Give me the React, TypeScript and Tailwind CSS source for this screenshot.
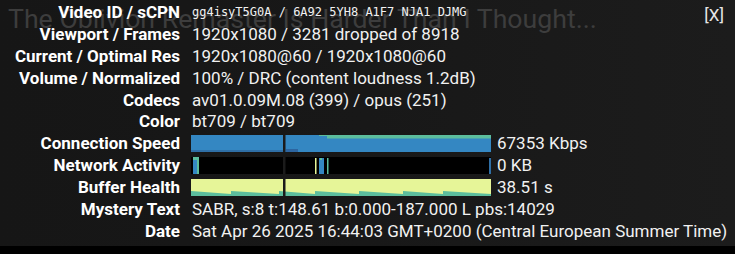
const rows: { label: string; value?: string; mono?: boolean; chart?: "speed" | "net" | "buffer" }[] = [
  { label: "Video ID / sCPN", value: "gg4isyT5G0A / 6A92 5YH8 A1F7 NJA1 DJMG", mono: true },
  { label: "Viewport / Frames", value: "1920x1080 / 3281 dropped of 8918" },
  { label: "Current / Optimal Res", value: "1920x1080@60 / 1920x1080@60" },
  { label: "Volume / Normalized", value: "100% / DRC (content loudness 1.2dB)" },
  { label: "Codecs", value: "av01.0.09M.08 (399) / opus (251)" },
  { label: "Color", value: "bt709 / bt709" },
  { label: "Connection Speed", value: "67353 Kbps", chart: "speed" },
  { label: "Network Activity", value: "0 KB", chart: "net" },
  { label: "Buffer Health", value: "38.51 s", chart: "buffer" },
  { label: "Mystery Text", value: "SABR, s:8 t:148.61 b:0.000-187.000 L pbs:14029" },
  { label: "Date", value: "Sat Apr 26 2025 16:44:03 GMT+0200 (Central European Summer Time)" },
];

const Chart = ({ kind }: { kind: "speed" | "net" | "buffer" }) => {
  if (kind === "speed") {
    return (
      <svg width="300" height="17" className="block">
        <rect x="0" y="0" width="300" height="17" fill="#3487c2" />
        <rect x="0" y="15" width="92" height="2" fill="#2f6fa6" />
        <rect x="95" y="14" width="12" height="3" fill="#2d65a0" />
        <rect x="128" y="0" width="172" height="1" fill="#5cbd9d" />
        <rect x="136" y="0" width="164" height="3.5" fill="#5cbd9d" />
        <rect x="92" y="0" width="2.5" height="17" fill="#1b1b1b" />
      </svg>
    );
  }
  if (kind === "net") {
    return (
      <svg width="300" height="17" className="block">
        <rect x="0" y="0" width="300" height="17" fill="#000" />
        <rect x="2" y="1" width="5" height="16" fill="#3487c2" />
        <rect x="6" y="0" width="2" height="17" fill="#5cbd9d" />
        <rect x="2" y="0" width="4" height="3" fill="#5cbd9d" />
        <rect x="124" y="1" width="1.5" height="16" fill="#e6f598" />
        <rect x="128" y="1" width="5" height="16" fill="#3487c2" />
        <rect x="129" y="1" width="2" height="2" fill="#5cbd9d" />
        <rect x="136" y="1" width="1.5" height="16" fill="#5cbd9d" />
        <rect x="298" y="1" width="2" height="16" fill="#2f6fa6" />
        <rect x="92" y="0" width="2.5" height="17" fill="#1b1b1b" />
      </svg>
    );
  }
  const steps = [0, 40, 88, 124, 168, 212, 252, 300];
  return (
    <svg width="300" height="17" className="block">
      <rect x="0" y="0" width="300" height="17" fill="#e6f598" />
      {steps.slice(0, -1).map((s, i) => (
        <polygon
          key={s}
          points={`${s},${17} ${s},${12} ${steps[i + 1]},${15} ${steps[i + 1]},${17}`}
          fill="#5cbd9d"
        />
      ))}
      <rect x="92" y="0" width="2.5" height="17" fill="#1b1b1b" />
    </svg>
  );
};

export default function App() {
  return (
    <div className="w-[735px] h-[254px] bg-black overflow-hidden">
      <div
        className="relative h-[246px] bg-gradient-to-r from-[#161616] via-[#181818] to-[#1c1c1c]"
        style={{ fontFamily: "Roboto, 'Noto Sans', Arial, sans-serif" }}
      >
        <div className="absolute left-[8px] top-[4px] text-[26.7px] leading-[30px] text-[#3d3d3d] whitespace-nowrap">
          The Oblivion Remaster Is Harder Than I Thought...
        </div>
        <div className="absolute right-[11px] top-[4px] text-[17px] leading-[22px] text-[#e6e6e6]">[X]</div>
        <div className="relative pt-[1px]">
          {rows.map((r) => (
            <div key={r.label} className="flex h-[21.9px] items-center">
              <div className="w-[180px] shrink-0 text-right text-[17px] font-bold text-white leading-[22px] whitespace-nowrap">
                {r.label}
              </div>
              <div className="pl-[12px] flex items-center whitespace-nowrap text-[#f1f1f1]">
                {r.chart && (
                  <div className="ml-[-1px] mr-[6px]">
                    <Chart kind={r.chart} />
                  </div>
                )}
                {r.mono ? (
                  <span className="text-[12px] leading-[22px]" style={{ fontFamily: "'DejaVu Sans Mono', monospace" }}>
                    {r.value}
                  </span>
                ) : (
                  <span className="text-[17px] leading-[22px]">{r.value}</span>
                )}
              </div>
            </div>
          ))}
        </div>
      </div>
    </div>
  );
}
